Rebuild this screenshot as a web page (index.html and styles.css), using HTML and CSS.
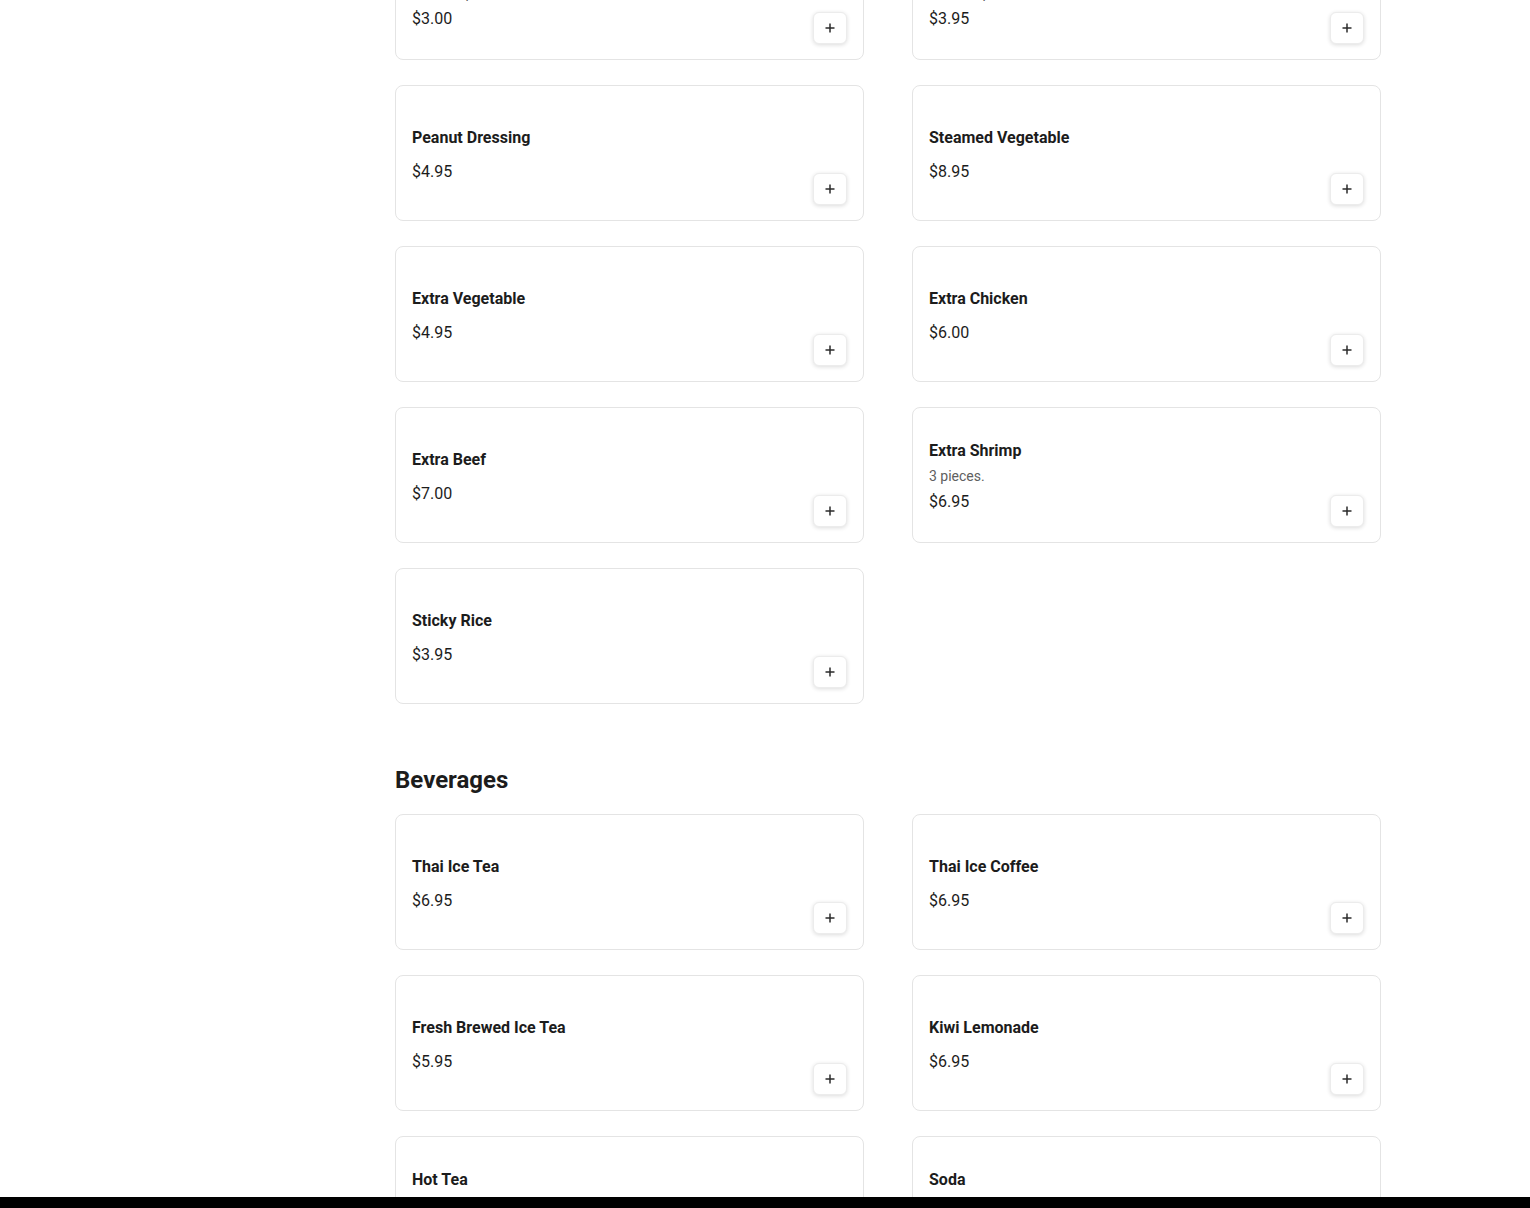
FILE: index.html
```html
<!DOCTYPE html>
<html lang="en">
<head>
<meta charset="utf-8">
<title>Menu</title>
<link rel="stylesheet" href="styles.css">
</head>
<body>
<div class="page">
  <aside class="sidebar"></aside>
  <main class="menu">
    <section class="section section-first">
      <div class="grid">
        <div class="card">
          <div class="info"><div class="name">Extra Peanut Sauce</div><div class="desc">Small cup.</div><div class="price">$3.00</div></div>
          <button class="add" aria-label="Add"><svg viewBox="0 0 12 12" width="12" height="12"><path d="M6 1.5v9M1.5 6h9" stroke="#2b2b2b" stroke-width="1.5" fill="none"/></svg></button>
        </div>
        <div class="card">
          <div class="info"><div class="name">Extra Curry Sauce</div><div class="desc">Small cup.</div><div class="price">$3.95</div></div>
          <button class="add" aria-label="Add"><svg viewBox="0 0 12 12" width="12" height="12"><path d="M6 1.5v9M1.5 6h9" stroke="#2b2b2b" stroke-width="1.5" fill="none"/></svg></button>
        </div>
        <div class="card">
          <div class="info"><div class="name">Peanut Dressing</div><div class="price">$4.95</div></div>
          <button class="add" aria-label="Add"><svg viewBox="0 0 12 12" width="12" height="12"><path d="M6 1.5v9M1.5 6h9" stroke="#2b2b2b" stroke-width="1.5" fill="none"/></svg></button>
        </div>
        <div class="card">
          <div class="info"><div class="name">Steamed Vegetable</div><div class="price">$8.95</div></div>
          <button class="add" aria-label="Add"><svg viewBox="0 0 12 12" width="12" height="12"><path d="M6 1.5v9M1.5 6h9" stroke="#2b2b2b" stroke-width="1.5" fill="none"/></svg></button>
        </div>
        <div class="card">
          <div class="info"><div class="name">Extra Vegetable</div><div class="price">$4.95</div></div>
          <button class="add" aria-label="Add"><svg viewBox="0 0 12 12" width="12" height="12"><path d="M6 1.5v9M1.5 6h9" stroke="#2b2b2b" stroke-width="1.5" fill="none"/></svg></button>
        </div>
        <div class="card">
          <div class="info"><div class="name">Extra Chicken</div><div class="price">$6.00</div></div>
          <button class="add" aria-label="Add"><svg viewBox="0 0 12 12" width="12" height="12"><path d="M6 1.5v9M1.5 6h9" stroke="#2b2b2b" stroke-width="1.5" fill="none"/></svg></button>
        </div>
        <div class="card">
          <div class="info"><div class="name">Extra Beef</div><div class="price">$7.00</div></div>
          <button class="add" aria-label="Add"><svg viewBox="0 0 12 12" width="12" height="12"><path d="M6 1.5v9M1.5 6h9" stroke="#2b2b2b" stroke-width="1.5" fill="none"/></svg></button>
        </div>
        <div class="card">
          <div class="info"><div class="name">Extra Shrimp</div><div class="desc">3 pieces.</div><div class="price">$6.95</div></div>
          <button class="add" aria-label="Add"><svg viewBox="0 0 12 12" width="12" height="12"><path d="M6 1.5v9M1.5 6h9" stroke="#2b2b2b" stroke-width="1.5" fill="none"/></svg></button>
        </div>
        <div class="card">
          <div class="info"><div class="name">Sticky Rice</div><div class="price">$3.95</div></div>
          <button class="add" aria-label="Add"><svg viewBox="0 0 12 12" width="12" height="12"><path d="M6 1.5v9M1.5 6h9" stroke="#2b2b2b" stroke-width="1.5" fill="none"/></svg></button>
        </div>
      </div>
    </section>
    <section class="section">
      <h2 class="section-title">Beverages</h2>
      <div class="grid">
        <div class="card">
          <div class="info"><div class="name">Thai Ice Tea</div><div class="price">$6.95</div></div>
          <button class="add" aria-label="Add"><svg viewBox="0 0 12 12" width="12" height="12"><path d="M6 1.5v9M1.5 6h9" stroke="#2b2b2b" stroke-width="1.5" fill="none"/></svg></button>
        </div>
        <div class="card">
          <div class="info"><div class="name">Thai Ice Coffee</div><div class="price">$6.95</div></div>
          <button class="add" aria-label="Add"><svg viewBox="0 0 12 12" width="12" height="12"><path d="M6 1.5v9M1.5 6h9" stroke="#2b2b2b" stroke-width="1.5" fill="none"/></svg></button>
        </div>
        <div class="card">
          <div class="info"><div class="name">Fresh Brewed Ice Tea</div><div class="price">$5.95</div></div>
          <button class="add" aria-label="Add"><svg viewBox="0 0 12 12" width="12" height="12"><path d="M6 1.5v9M1.5 6h9" stroke="#2b2b2b" stroke-width="1.5" fill="none"/></svg></button>
        </div>
        <div class="card">
          <div class="info"><div class="name">Kiwi Lemonade</div><div class="price">$6.95</div></div>
          <button class="add" aria-label="Add"><svg viewBox="0 0 12 12" width="12" height="12"><path d="M6 1.5v9M1.5 6h9" stroke="#2b2b2b" stroke-width="1.5" fill="none"/></svg></button>
        </div>
        <div class="card">
          <div class="info"><div class="name">Hot Tea</div><div class="desc">Green or jasmine.</div><div class="price">$3.95</div></div>
          <button class="add" aria-label="Add"><svg viewBox="0 0 12 12" width="12" height="12"><path d="M6 1.5v9M1.5 6h9" stroke="#2b2b2b" stroke-width="1.5" fill="none"/></svg></button>
        </div>
        <div class="card">
          <div class="info"><div class="name">Soda</div><div class="desc">Coke, Diet Coke or Sprite.</div><div class="price">$2.95</div></div>
          <button class="add" aria-label="Add"><svg viewBox="0 0 12 12" width="12" height="12"><path d="M6 1.5v9M1.5 6h9" stroke="#2b2b2b" stroke-width="1.5" fill="none"/></svg></button>
        </div>
      </div>
    </section>
  </main>
</div>
<div class="bottom-bar"></div>
</body>
</html>
```

FILE: styles.css
```css
* { box-sizing: border-box; }
html, body { margin: 0; padding: 0; background: #fff; }
body {
  font-family: Roboto, "Liberation Sans", Arial, sans-serif;
  color: #1c1c1c;
  overflow: hidden;
  height: 1208px;
}
.page {
  display: flex;
  gap: 48px;
  padding-right: 149px;
}
.sidebar {
  width: 347px;
  flex: none;
}
.menu {
  flex: 1;
  display: flex;
  flex-direction: column;
  gap: 60px;
}
.section-first {
  margin-top: -76px;
}
.section-title {
  margin: 0 0 18px;
  font-size: 24px;
  line-height: 32px;
  font-weight: 700;
  color: #1c1c1c;
}
.grid {
  display: grid;
  grid-template-columns: 1fr 1fr;
  column-gap: 48px;
  row-gap: 25px;
}
.card {
  height: 136px;
  border: 1px solid #e4e4e4;
  border-radius: 8px;
  padding: 16px 16px 15px;
  display: flex;
  align-items: stretch;
  background: #fff;
}
.info {
  flex: 1;
  display: flex;
  flex-direction: column;
  justify-content: center;
  padding-top: 2px;
}
.name {
  font-size: 16px;
  line-height: 24px;
  font-weight: 700;
  color: #1c1c1c;
  margin-bottom: 10px;
}
.desc {
  font-size: 14px;
  line-height: 20px;
  color: #606060;
  margin-top: -7px;
  margin-bottom: 4px;
}
.price {
  font-size: 16px;
  line-height: 24px;
  color: #1c1c1c;
}
.add {
  align-self: flex-end;
  width: 34px;
  height: 32px;
  padding: 0;
  border: 1px solid #ececec;
  border-radius: 6px;
  background: #fff;
  box-shadow: 0 1px 4px rgba(0, 0, 0, 0.14);
  display: flex;
  align-items: center;
  justify-content: center;
  cursor: pointer;
}
.add svg { display: block; }
.bottom-bar {
  position: fixed;
  left: 0;
  right: 0;
  bottom: 0;
  height: 11px;
  background: #000;
}
```
